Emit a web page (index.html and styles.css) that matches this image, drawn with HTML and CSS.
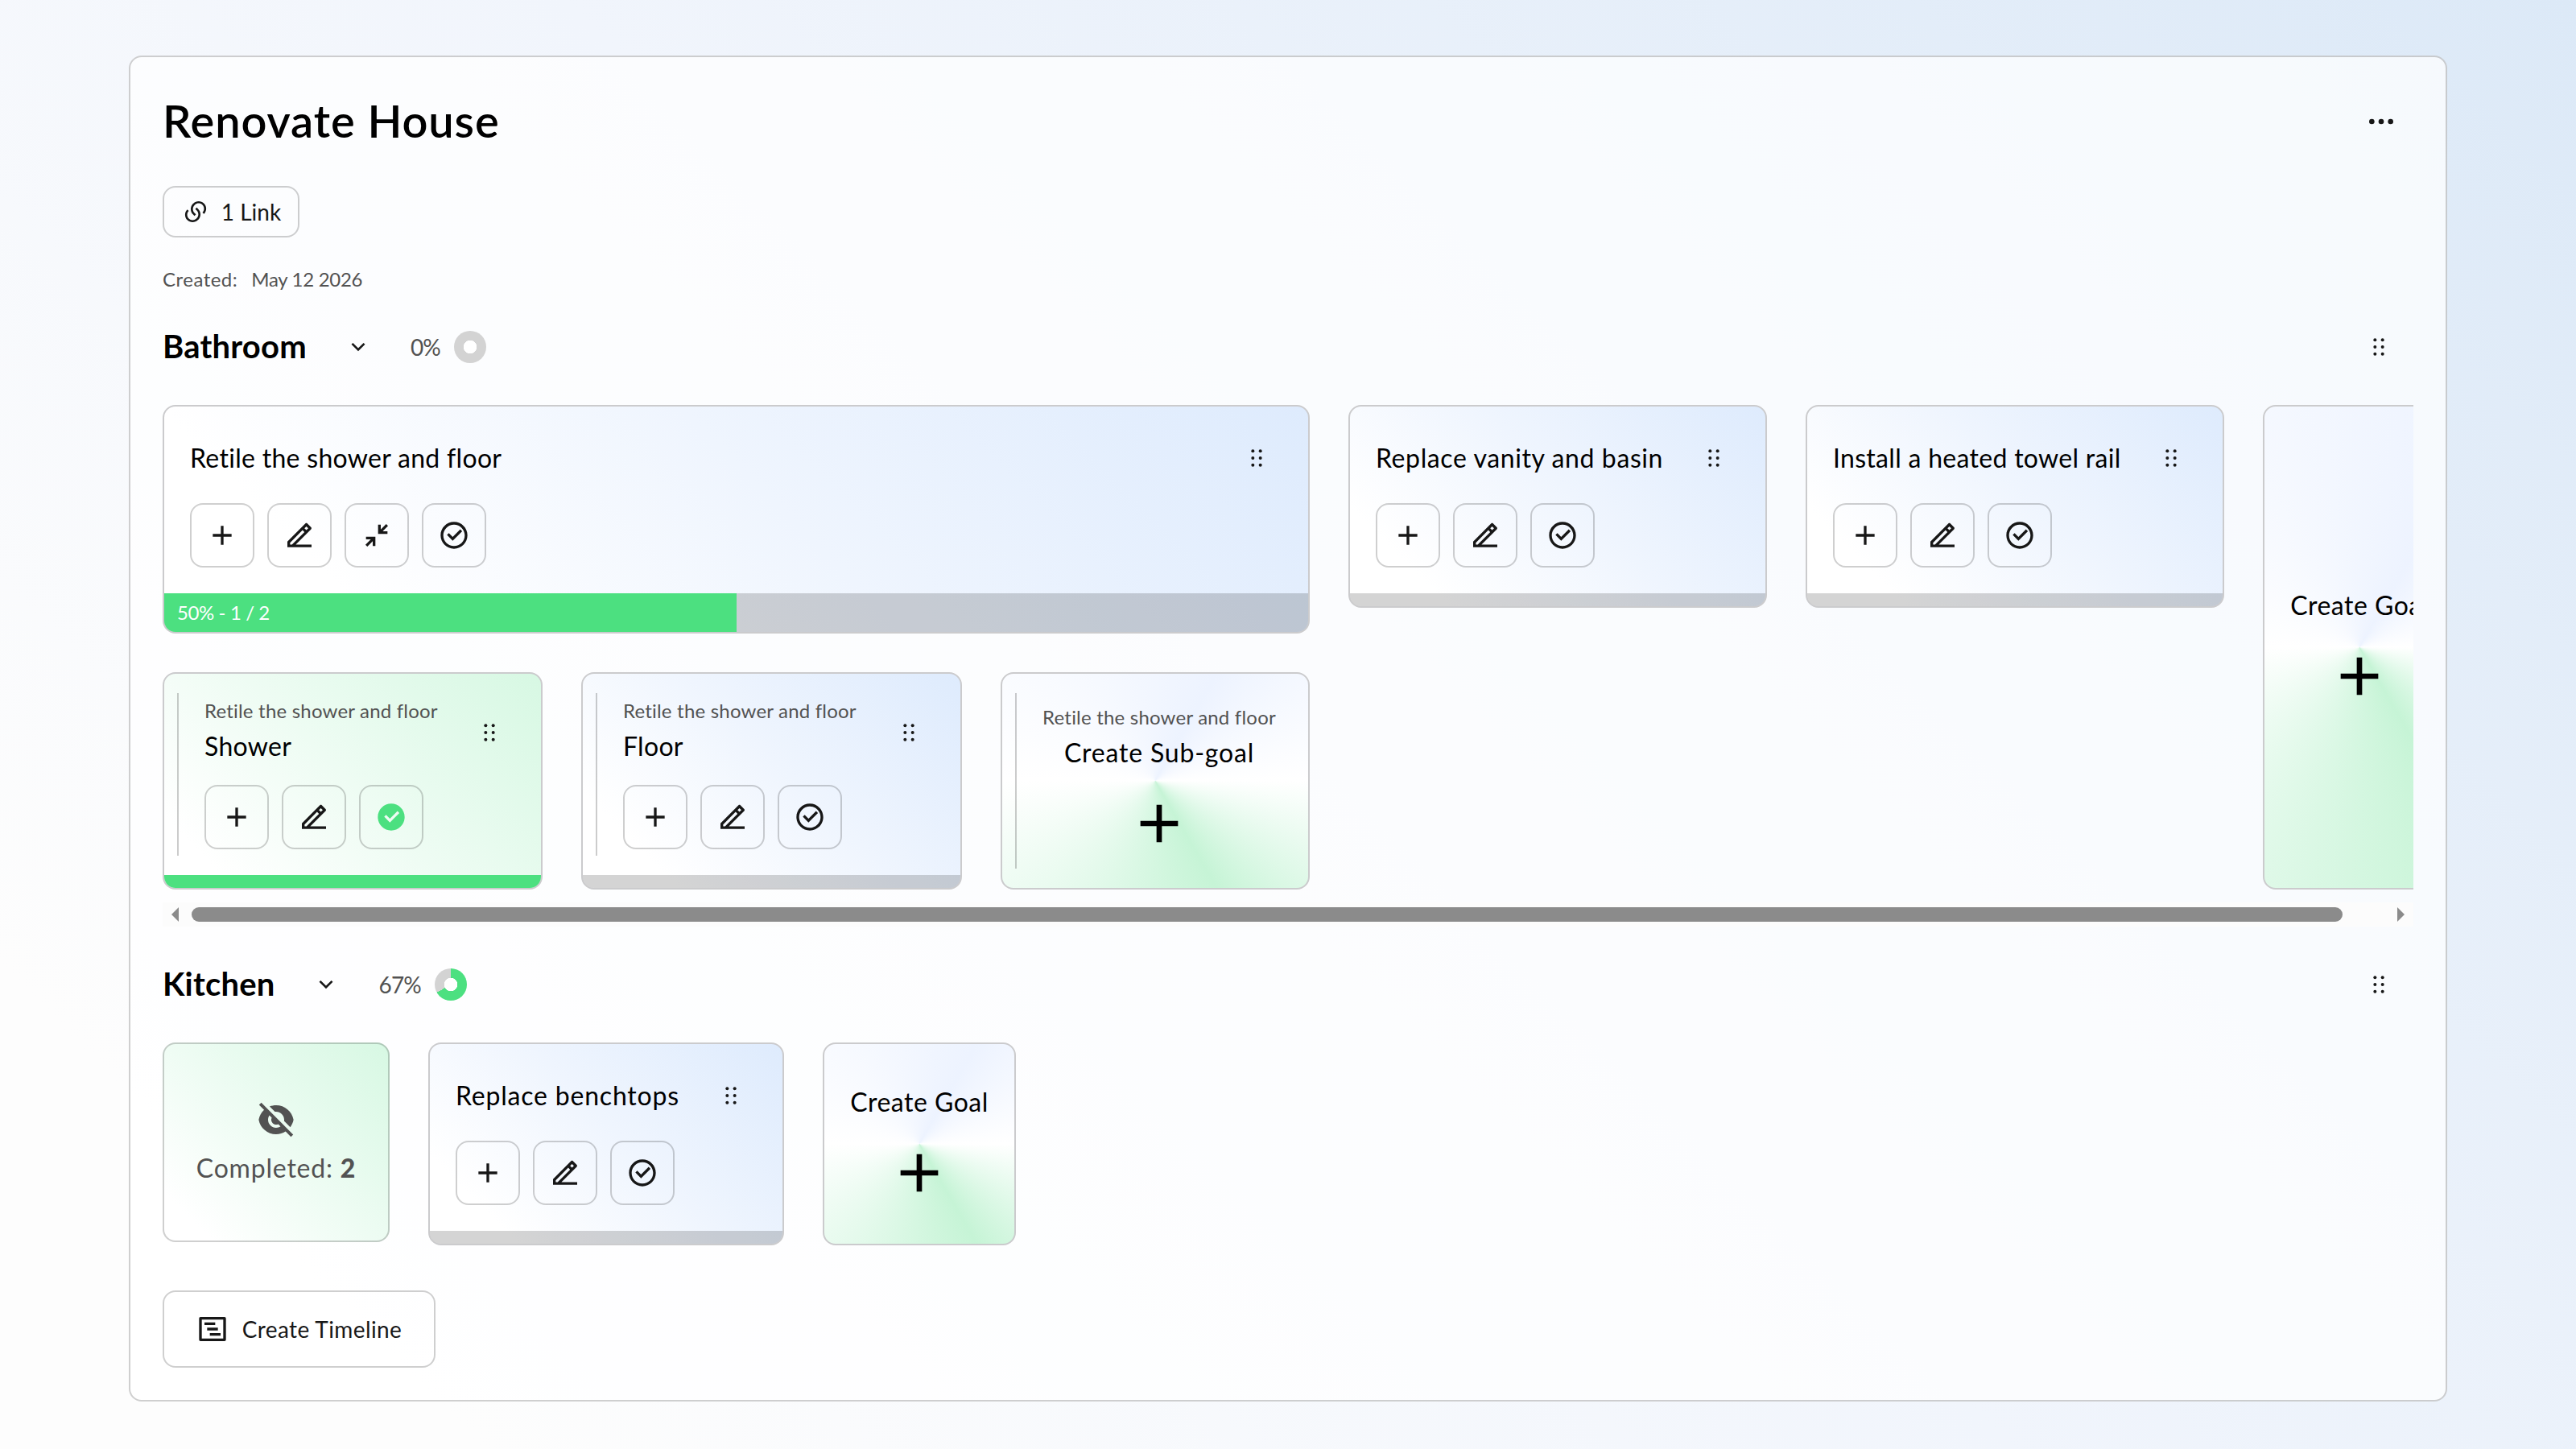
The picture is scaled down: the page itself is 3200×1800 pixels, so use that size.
FILE: index.html
```
<!DOCTYPE html>
<html lang="en">
<head>
    <meta charset="utf-8">
    <meta name="viewport" content="width=device-width, initial-scale=1.0">
    <title>Renovate House</title>
    <link rel="stylesheet" href="styles.css">
</head>
<body>
    <!-- Icon sprite -->
    <svg class="sprite">
        <symbol id="add" viewBox="0 0 24 24"><path d="M11 11V5H13V11H19V13H13V19H11V13H5V11H11Z"/></symbol>
        <symbol id="edit" viewBox="0 0 24 24"><path d="M5 18.89H6.41421L15.7279 9.57627L14.3137 8.16206L5 17.4758V18.89ZM21 20.89H3V16.6473L16.435 3.21231C16.8256 2.82179 17.4587 2.82179 17.8492 3.21231L20.6777 6.04074C21.0682 6.43126 21.0682 7.06443 20.6777 7.45495L9.24264 18.89H21V20.89ZM15.7279 6.74785L17.1421 8.16206L18.5563 6.74785L17.1421 5.33363L15.7279 6.74785Z"/></symbol>
        <symbol id="collapse" viewBox="0 0 24 24"><path d="M13 4H15V7.586L19 3.586L20.414 5L16.414 9H20V11H13ZM4 13H11V20H9V16.414L5 20.414L3.586 19L7.586 15H4Z"/></symbol>
        <symbol id="check" viewBox="0 0 24 24"><path d="M12 22C6.47715 22 2 17.5228 2 12C2 6.47715 6.47715 2 12 2C17.5228 2 22 6.47715 22 12C22 17.5228 17.5228 22 12 22ZM12 20C16.4183 20 20 16.4183 20 12C20 7.58172 16.4183 4 12 4C7.58172 4 4 7.58172 4 12C4 16.4183 7.58172 20 12 20ZM11.0026 16L6.75999 11.7574L8.17421 10.3431L11.0026 13.1716L16.6595 7.51472L18.0737 8.92893L11.0026 16Z"/></symbol>
        <symbol id="check-fill" viewBox="0 0 24 24"><path d="M12 22C6.47715 22 2 17.5228 2 12C2 6.47715 6.47715 2 12 2C17.5228 2 22 6.47715 22 12C22 17.5228 17.5228 22 12 22ZM11.0026 16L18.0737 8.92893L16.6595 7.51472L11.0026 13.1716L8.17421 10.3431L6.75999 11.7574L11.0026 16Z"/></symbol>
        <symbol id="drag" viewBox="0 0 24 24"><circle cx="8.5" cy="5.5" r="1.5"/><circle cx="15.5" cy="5.5" r="1.5"/><circle cx="8.5" cy="12" r="1.5"/><circle cx="15.5" cy="12" r="1.5"/><circle cx="8.5" cy="18.5" r="1.5"/><circle cx="15.5" cy="18.5" r="1.5"/></symbol>
        <symbol id="more" viewBox="0 0 24 24"><circle cx="5" cy="12" r="2"/><circle cx="12" cy="12" r="2"/><circle cx="19" cy="12" r="2"/></symbol>
        <symbol id="arrow-down" viewBox="0 0 24 24"><path d="M12 13.1714L16.9497 8.22168L18.3639 9.63589L12 16L5.63599 9.63589L7.0502 8.22168L12 13.1714Z"/></symbol>
        <symbol id="links" viewBox="0 0 24 24"><path d="M13.0607 8.11097L14.4749 9.52518C17.2086 12.2589 17.2086 16.691 14.4749 19.4247L14.1214 19.7782C11.3877 22.5119 6.95555 22.5119 4.22188 19.7782C1.48821 17.0446 1.48821 12.6124 4.22188 9.87874L5.6361 11.293C3.68348 13.2456 3.68348 16.4114 5.6361 18.364C7.58872 20.3166 10.7545 20.3166 12.7072 18.364L13.0607 18.0105C15.0133 16.0578 15.0133 12.892 13.0607 10.9394L11.6465 9.52518L13.0607 8.11097ZM19.7782 14.1214L18.364 12.7072C20.3166 10.7545 20.3166 7.58872 18.364 5.6361C16.4114 3.68348 13.2456 3.68348 11.293 5.6361L10.9394 5.98965C8.98678 7.94227 8.98678 11.1081 10.9394 13.0607L12.3536 14.4749L10.9394 15.8891L9.52518 14.4749C6.79151 11.7413 6.79151 7.30911 9.52518 4.57544L9.87874 4.22188C12.6124 1.48821 17.0446 1.48821 19.7782 4.22188C22.5119 6.95555 22.5119 11.3877 19.7782 14.1214Z"/></symbol>
        <symbol id="eye-off" viewBox="0 0 24 24"><path d="M4.52047 5.93457L1.39366 2.80777L2.80788 1.39355L22.6069 21.1925L21.1927 22.6068L17.8827 19.2968C16.1814 20.3755 14.1638 21.0002 12.0003 21.0002C6.60812 21.0002 2.12215 17.1204 1.18164 12.0002C1.61832 9.62282 2.81932 7.5129 4.52047 5.93457ZM14.7577 16.1718L13.2937 14.7078C12.902 14.8952 12.4634 15.0002 12.0003 15.0002C10.3434 15.0002 9.00026 13.657 9.00026 12.0002C9.00026 11.537 9.10522 11.0984 9.29263 10.7067L7.82866 9.24277C7.30514 10.0332 7.00026 10.9811 7.00026 12.0002C7.00026 14.7616 9.23884 17.0002 12.0003 17.0002C13.0193 17.0002 13.9672 16.6953 14.7577 16.1718ZM7.97446 3.76015C9.22127 3.26959 10.5793 3.00016 12.0003 3.00016C17.3924 3.00016 21.8784 6.87992 22.8189 12.0002C22.5067 13.6998 21.8038 15.2628 20.8068 16.5925L16.947 12.7327C16.9821 12.4936 17.0003 12.249 17.0003 12.0002C17.0003 9.23873 14.7617 7.00016 12.0003 7.00016C11.7514 7.00016 11.5068 7.01833 11.2677 7.05343L7.97446 3.76015Z"/></symbol>
        <symbol id="timeline" viewBox="0 0 24 24"><path d="M3 3H21A1 1 0 0 1 22 4V20A1 1 0 0 1 21 21H3A1 1 0 0 1 2 20V4A1 1 0 0 1 3 3ZM4 5V19H20V5ZM6 7H14V9H6ZM8 11H16V13H8ZM10 15H18V17H10Z" fill-rule="evenodd"/></symbol>
    </svg>

    <main class="project">
        <header class="project-header">
            <h1>Renovate House</h1>
            <button class="more-btn"><svg class="icon"><use href="#more"/></svg></button>
        </header>

        <button class="link-btn"><svg class="icon-sm"><use href="#links"/></svg><span>1 Link</span></button>

        <div class="created"><span>Created:</span><span class="date">May 12 2026</span></div>

        <div class="timeline-header">
            <h2>Bathroom</h2>
            <button class="toggle"><svg class="icon-sm"><use href="#arrow-down"/></svg></button>
            <span class="percent">0%</span>
            <span class="donut"></span>
            <button class="handle"><svg class="icon-sm"><use href="#drag"/></svg></button>
        </div>

        <section class="scroller">
            <div class="goals">
                <div class="goal-group">
                    <div class="goal">
                        <div class="goal-top">
                            <p class="goal-title">Retile the shower and floor</p>
                            <button class="handle"><svg class="icon-sm"><use href="#drag"/></svg></button>
                        </div>
                        <div class="actions">
                            <button><svg class="icon"><use href="#add"/></svg></button>
                            <button><svg class="icon"><use href="#edit"/></svg></button>
                            <button><svg class="icon"><use href="#collapse"/></svg></button>
                            <button><svg class="icon"><use href="#check"/></svg></button>
                        </div>
                        <div class="progress tall"><div class="fill" style="width: 50%">50% - 1 / 2</div></div>
                    </div>
                    <div class="subgoals">
                        <div class="goal sub done">
                            <div class="goal-top">
                                <div>
                                    <p class="parent">Retile the shower and floor</p>
                                    <p class="goal-title">Shower</p>
                                </div>
                                <button class="handle"><svg class="icon-sm"><use href="#drag"/></svg></button>
                            </div>
                            <div class="actions">
                                <button><svg class="icon"><use href="#add"/></svg></button>
                                <button><svg class="icon"><use href="#edit"/></svg></button>
                                <button><svg class="icon green"><use href="#check-fill"/></svg></button>
                            </div>
                            <div class="progress"><div class="fill" style="width: 100%"></div></div>
                        </div>
                        <div class="goal sub">
                            <div class="goal-top">
                                <div>
                                    <p class="parent">Retile the shower and floor</p>
                                    <p class="goal-title">Floor</p>
                                </div>
                                <button class="handle"><svg class="icon-sm"><use href="#drag"/></svg></button>
                            </div>
                            <div class="actions">
                                <button><svg class="icon"><use href="#add"/></svg></button>
                                <button><svg class="icon"><use href="#edit"/></svg></button>
                                <button><svg class="icon"><use href="#check"/></svg></button>
                            </div>
                            <div class="progress"></div>
                        </div>
                        <div class="create sub">
                            <div>
                                <p class="parent">Retile the shower and floor</p>
                                <p class="goal-title">Create Sub-goal</p>
                            </div>
                            <svg class="icon-lg"><use href="#add"/></svg>
                        </div>
                    </div>
                </div>
                <div class="goal vanity">
                    <div class="goal-top">
                        <p class="goal-title">Replace vanity and basin</p>
                        <button class="handle"><svg class="icon-sm"><use href="#drag"/></svg></button>
                    </div>
                    <div class="actions">
                        <button><svg class="icon"><use href="#add"/></svg></button>
                        <button><svg class="icon"><use href="#edit"/></svg></button>
                        <button><svg class="icon"><use href="#check"/></svg></button>
                    </div>
                    <div class="progress"></div>
                </div>
                <div class="goal rail">
                    <div class="goal-top">
                        <p class="goal-title">Install a heated towel rail</p>
                        <button class="handle"><svg class="icon-sm"><use href="#drag"/></svg></button>
                    </div>
                    <div class="actions">
                        <button><svg class="icon"><use href="#add"/></svg></button>
                        <button><svg class="icon"><use href="#edit"/></svg></button>
                        <button><svg class="icon"><use href="#check"/></svg></button>
                    </div>
                    <div class="progress"></div>
                </div>
                <div class="create">
                    <p class="goal-title">Create Goal</p>
                    <svg class="icon-lg"><use href="#add"/></svg>
                </div>
            </div>
            <div class="scrollbar">
                <span class="arrow left"></span>
                <span class="thumb"></span>
                <span class="arrow right"></span>
            </div>
        </section>

        <div class="timeline-header">
            <h2>Kitchen</h2>
            <button class="toggle"><svg class="icon-sm"><use href="#arrow-down"/></svg></button>
            <span class="percent">67%</span>
            <span class="donut kitchen-donut"></span>
            <button class="handle"><svg class="icon-sm"><use href="#drag"/></svg></button>
        </div>

        <section class="goals">
            <div class="completed">
                <svg class="icon-md"><use href="#eye-off"/></svg>
                <p class="goal-title">Completed: <b>2</b></p>
            </div>
            <div class="goal benchtops">
                <div class="goal-top">
                    <p class="goal-title">Replace benchtops</p>
                    <button class="handle"><svg class="icon-sm"><use href="#drag"/></svg></button>
                </div>
                <div class="actions">
                    <button><svg class="icon"><use href="#add"/></svg></button>
                    <button><svg class="icon"><use href="#edit"/></svg></button>
                    <button><svg class="icon"><use href="#check"/></svg></button>
                </div>
                <div class="progress"></div>
            </div>
            <div class="create">
                <p class="goal-title">Create Goal</p>
                <svg class="icon-lg"><use href="#add"/></svg>
            </div>
        </section>

        <button class="timeline-btn"><svg class="icon"><use href="#timeline"/></svg><span>Create Timeline</span></button>
    </main>
</body>
</html>
```
FILE: styles.css
```
* {
    box-sizing: border-box;
}
html {
    height: 100%;
}
body {
    margin: 0;
    height: 1800px;
    padding: 69px 160px 59px;
    overflow: hidden;
    font-family: Lato, "Open Sans", sans-serif;
    color: #000;
    background: linear-gradient(45deg, #fdfdfd 12%, #f1f5fc 50%, #dce9f7 100%);
}
h1, h2, p {
    margin: 0;
}
button {
    display: flex;
    align-items: center;
    justify-content: center;
    padding: 0;
    font: inherit;
    color: #171717;
    background: none;
    border: none;
    border-radius: 16px;
    cursor: pointer;
}
svg {
    display: block;
    flex-shrink: 0;
    fill: currentColor;
}
.sprite {
    position: absolute;
    width: 0;
    height: 0;
}
.icon {
    width: 40px;
    height: 40px;
}
.icon-sm {
    width: 32px;
    height: 32px;
}
.icon-md {
    width: 48px;
    height: 48px;
}
.icon-lg {
    width: 80px;
    height: 80px;
}
.green {
    color: #4ce080;
}

/* Main panel */
.project {
    display: flex;
    flex-direction: column;
    align-items: flex-start;
    gap: 40px;
    height: 1672px;
    padding: 40px;
    background: rgba(255, 255, 255, 0.72);
    border: 2px solid rgba(0, 0, 0, 0.19);
    border-radius: 16px;
}
.project-header {
    display: flex;
    align-items: center;
    justify-content: space-between;
    width: 100%;
    height: 80px;
}
h1 {
    font-size: 56px;
    font-weight: 600;
    line-height: 77px;
    letter-spacing: 0.9px;
    padding-bottom: 3px;
}
.more-btn {
    width: 80px;
    height: 80px;
}
.link-btn {
    gap: 16px;
    width: 170px;
    height: 64px;
    padding-left: 2px;
    font-size: 28px;
    border: 2px solid rgba(0, 0, 0, 0.19);
}
.link-btn span, .timeline-btn span {
    padding-bottom: 1px;
}
.created {
    display: flex;
    gap: 17px;
    height: 24px;
    font-size: 24px;
    line-height: 23px;
    letter-spacing: 0.5px;
    color: #525252;
}
.date {
    letter-spacing: -0.3px;
}

/* Timeline title row */
.timeline-header {
    display: flex;
    align-items: center;
    width: 100%;
    height: 64px;
}
h2 {
    font-size: 40px;
    font-weight: 700;
    line-height: 62px;
    letter-spacing: 0.2px;
    padding-bottom: 2px;
}
.toggle {
    width: 64px;
    height: 64px;
    margin: 0 33px 0 32px;
}
.percent {
    padding-bottom: 1px;
    margin-right: 17px;
    font-size: 28px;
    letter-spacing: -0.8px;
    color: #525252;
}
.donut {
    width: 40px;
    height: 40px;
    border-radius: 50%;
    background: radial-gradient(#fff 8px, transparent 8.5px), #d3d3d3;
}
.kitchen-donut {
    background: radial-gradient(#fff 8px, transparent 8.5px), conic-gradient(#4ce080 66.7%, #d3d3d3 0);
}
.handle {
    width: 64px;
    height: 64px;
}
.timeline-header .handle {
    margin-left: auto;
    margin-right: 11px;
}

/* Goal cards */
.goals, .subgoals {
    display: flex;
    gap: 48px;
    align-items: flex-start;
}
.scroller {
    width: 100%;
    overflow: hidden;
}
.goal-group {
    display: flex;
    flex-direction: column;
    flex-shrink: 0;
    gap: 48px;
    width: 1425px;
}
.goal {
    flex-shrink: 0;
    overflow: hidden;
    border: 2px solid #cbcbcd;
    border-radius: 16px;
    background: linear-gradient(45deg, #fff 16%, #eff5fe 54%, #deebfd 100%);
}
.vanity, .rail {
    width: 520px;
}
.benchtops {
    width: 442px;
}
.goal-top {
    display: flex;
    align-items: center;
    justify-content: space-between;
    padding: 32px 32px 24px;
}
.goal-title {
    font-size: 32px;
    line-height: 47px;
    letter-spacing: 0.3px;
    padding-bottom: 1px;
    white-space: nowrap;
}
.vanity .goal-title {
    letter-spacing: 0.6px;
}
.benchtops .goal-title {
    letter-spacing: 0.8px;
}
.parent {
    font-size: 24px;
    line-height: 28px;
    letter-spacing: 0.2px;
    padding-bottom: 1px;
    margin-bottom: 5px;
    color: #525252;
    white-space: nowrap;
}
.actions {
    display: flex;
    gap: 16px;
    padding: 0 32px 32px;
}
.actions button {
    width: 80px;
    height: 80px;
    border: 2px solid rgba(0, 0, 0, 0.19);
}
.progress {
    height: 16px;
    background: rgba(0, 0, 0, 0.17);
}
.tall {
    height: 48px;
}
.fill {
    height: 100%;
    padding-left: 16px;
    font-size: 24px;
    line-height: 47px;
    letter-spacing: -0.4px;
    color: #fff;
    background: #4ce080;
}

/* Sub-goals have a vertical line on the left */
.sub {
    position: relative;
    width: 473px;
}
.sub::before {
    content: "";
    position: absolute;
    left: 16px;
    top: 24px;
    bottom: 24px;
    width: 2px;
    background: rgba(0, 0, 0, 0.2);
}
.goal.sub::before {
    bottom: 40px;
}
.sub .goal-top, .sub .actions {
    padding-left: 50px;
}
.done {
    width: 472px;
    background: linear-gradient(45deg, #fff 12%, #d7f8e3 100%);
}

/* Create cards */
.create {
    display: flex;
    flex-direction: column;
    align-items: center;
    justify-content: center;
    align-self: stretch;
    flex-shrink: 0;
    gap: 24px;
    width: 240px;
    text-align: center;
    border: 2px solid #cbcbcd;
    border-radius: 16px;
    background: conic-gradient(from 30deg, #edf3ff 0deg, #fff 60deg, #c6f4d6 120deg, #fff 240deg, #edf3ff 360deg);
}
.create .goal-title {
    letter-spacing: 0.5px;
}
.create.sub {
    width: 384px;
    padding-left: 50px;
    padding-right: 40px;
}
.create.sub .goal-title {
    letter-spacing: 0.8px;
}

.completed {
    display: flex;
    flex-direction: column;
    align-items: center;
    justify-content: center;
    gap: 12px;
    width: 282px;
    height: 248px;
    padding-top: 3px;
    color: #525252;
    border: 2px solid rgba(0, 0, 0, 0.19);
    border-radius: 16px;
    background: linear-gradient(45deg, #fff 12%, #d7f8e3 100%) border-box;
}
.completed .goal-title {
    letter-spacing: 0.8px;
}
.completed b {
    font-weight: 900;
}

/* Horizontal scrollbar */
.scrollbar {
    display: flex;
    align-items: center;
    justify-content: space-between;
    height: 30px;
    margin-top: 16px;
    padding: 0 11px;
    background: #fcfcfc;
}
.thumb {
    flex: 1;
    height: 18px;
    margin: 0 68px 0 16px;
    border-radius: 9px;
    background: #8b8b8b;
}
.arrow {
    border: 9px solid transparent;
}
.left {
    border-left: 0;
    border-right: 9px solid #8b8b8b;
}
.right {
    border-right: 0;
    border-left: 9px solid #8b8b8b;
}

.timeline-btn {
    gap: 17px;
    width: 339px;
    height: 96px;
    margin-top: 16px;
    font-size: 28px;
    letter-spacing: 0.4px;
    border: 2px solid rgba(0, 0, 0, 0.19);
}
```
